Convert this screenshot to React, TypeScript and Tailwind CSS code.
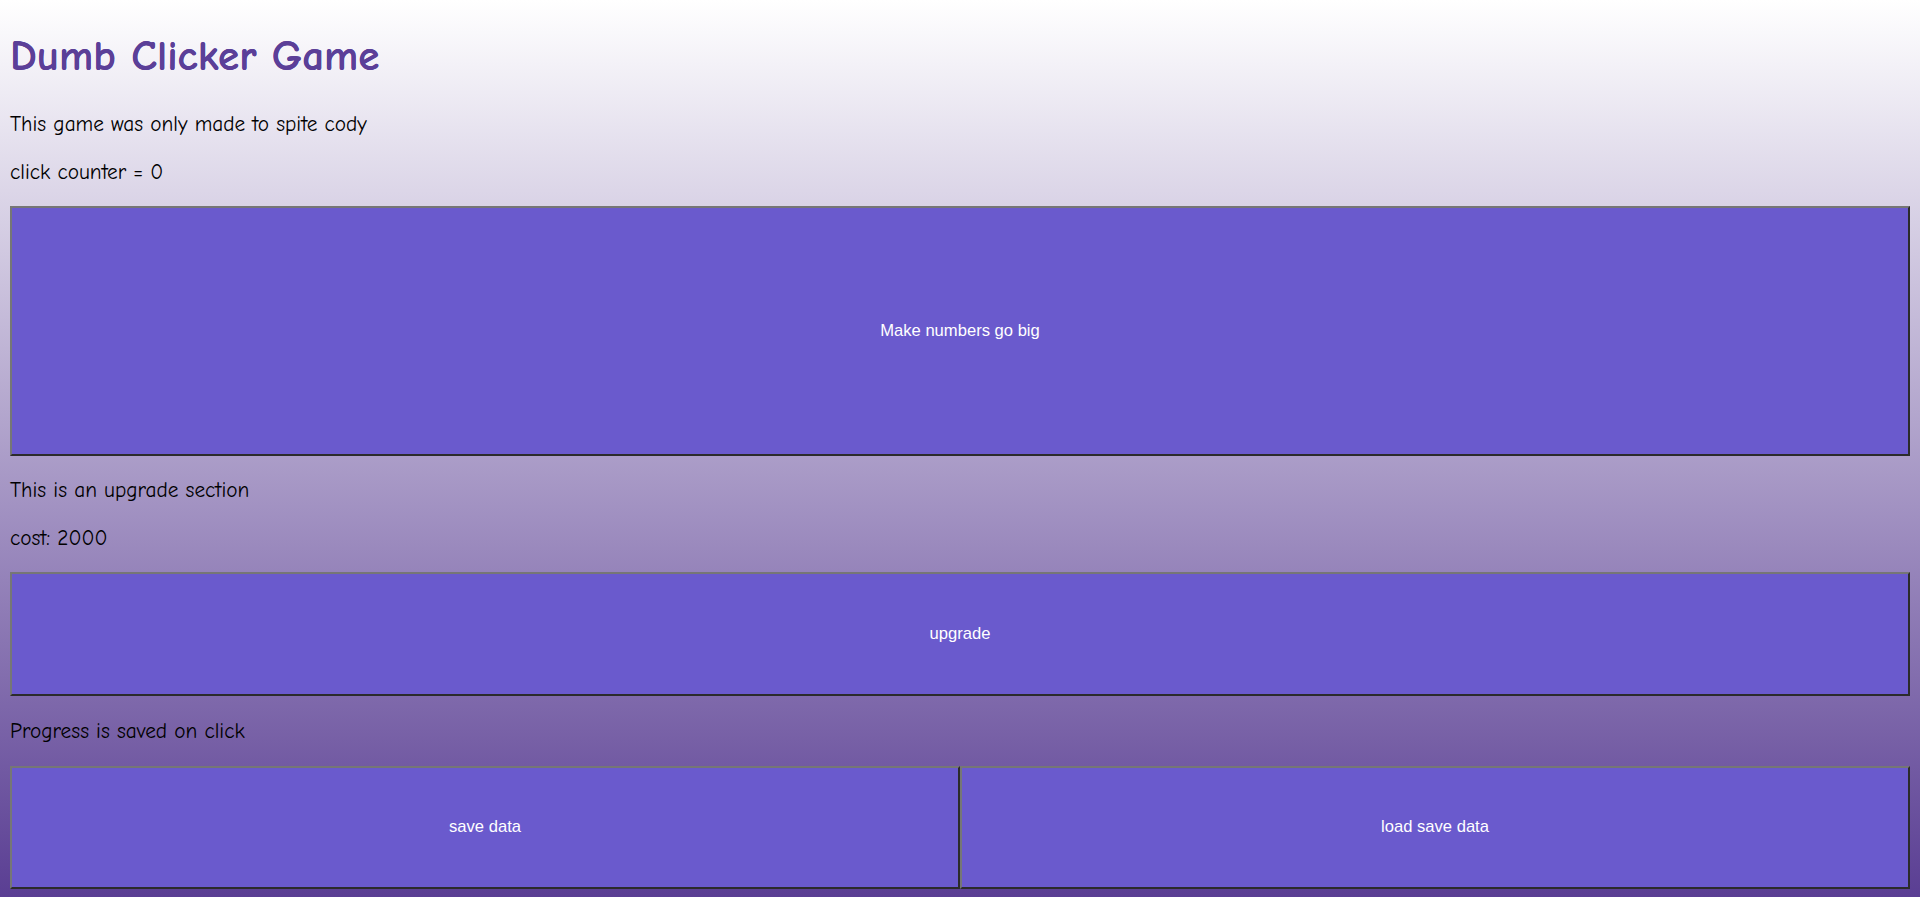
import React from "react";

const font = { fontFamily: '"Comic Sans MS", "Comic Neue", "Open Sans", sans-serif' };

function GameButton({ label, className }: { label: string; className: string }) {
  return (
    <button
      className={`bg-[#6a5acd] text-white text-[16.6px] font-['Liberation_Sans',Arial,sans-serif] border-2 border-solid border-t-[#767676] border-l-[#767676] border-b-[#2b2b2b] border-r-[#2b2b2b] flex items-center justify-center ${className}`}
    >
      {label}
    </button>
  );
}

export default function App() {
  return (
    <div className="min-h-screen w-full bg-[linear-gradient(to_bottom,#ffffff,#5a3e93)]">
      <div className="flex flex-col px-[10px] pt-[32px] text-black" style={font}>
        <h1 className="h-[48px] leading-[48px] text-[43px] font-bold text-[#5b3f98] whitespace-nowrap [text-shadow:0_0_0.6px_#5b3f98]">
          Dumb Clicker Game
        </h1>
        <p className="mt-[20px] h-[48px] leading-[48px] text-[21.3px]">This game was only made to spite cody</p>
        <p className="h-[48px] leading-[48px] text-[21.3px]">click counter = 0</p>
        <GameButton label="Make numbers go big" className="mt-[10px] h-[250px] w-full" />
        <p className="mt-[10px] h-[48px] leading-[48px] text-[21.3px]">This is an upgrade section</p>
        <p className="h-[48px] leading-[48px] text-[21.3px]">cost: 2000</p>
        <GameButton label="upgrade" className="mt-[10px] h-[124px] w-full" />
        <p className="mt-[11px] h-[48px] leading-[48px] text-[21.3px]">Progress is saved on click</p>
        <div className="mt-[11px] flex">
          <GameButton label="save data" className="h-[123px] w-1/2" />
          <GameButton label="load save data" className="h-[123px] w-1/2" />
        </div>
      </div>
    </div>
  );
}
